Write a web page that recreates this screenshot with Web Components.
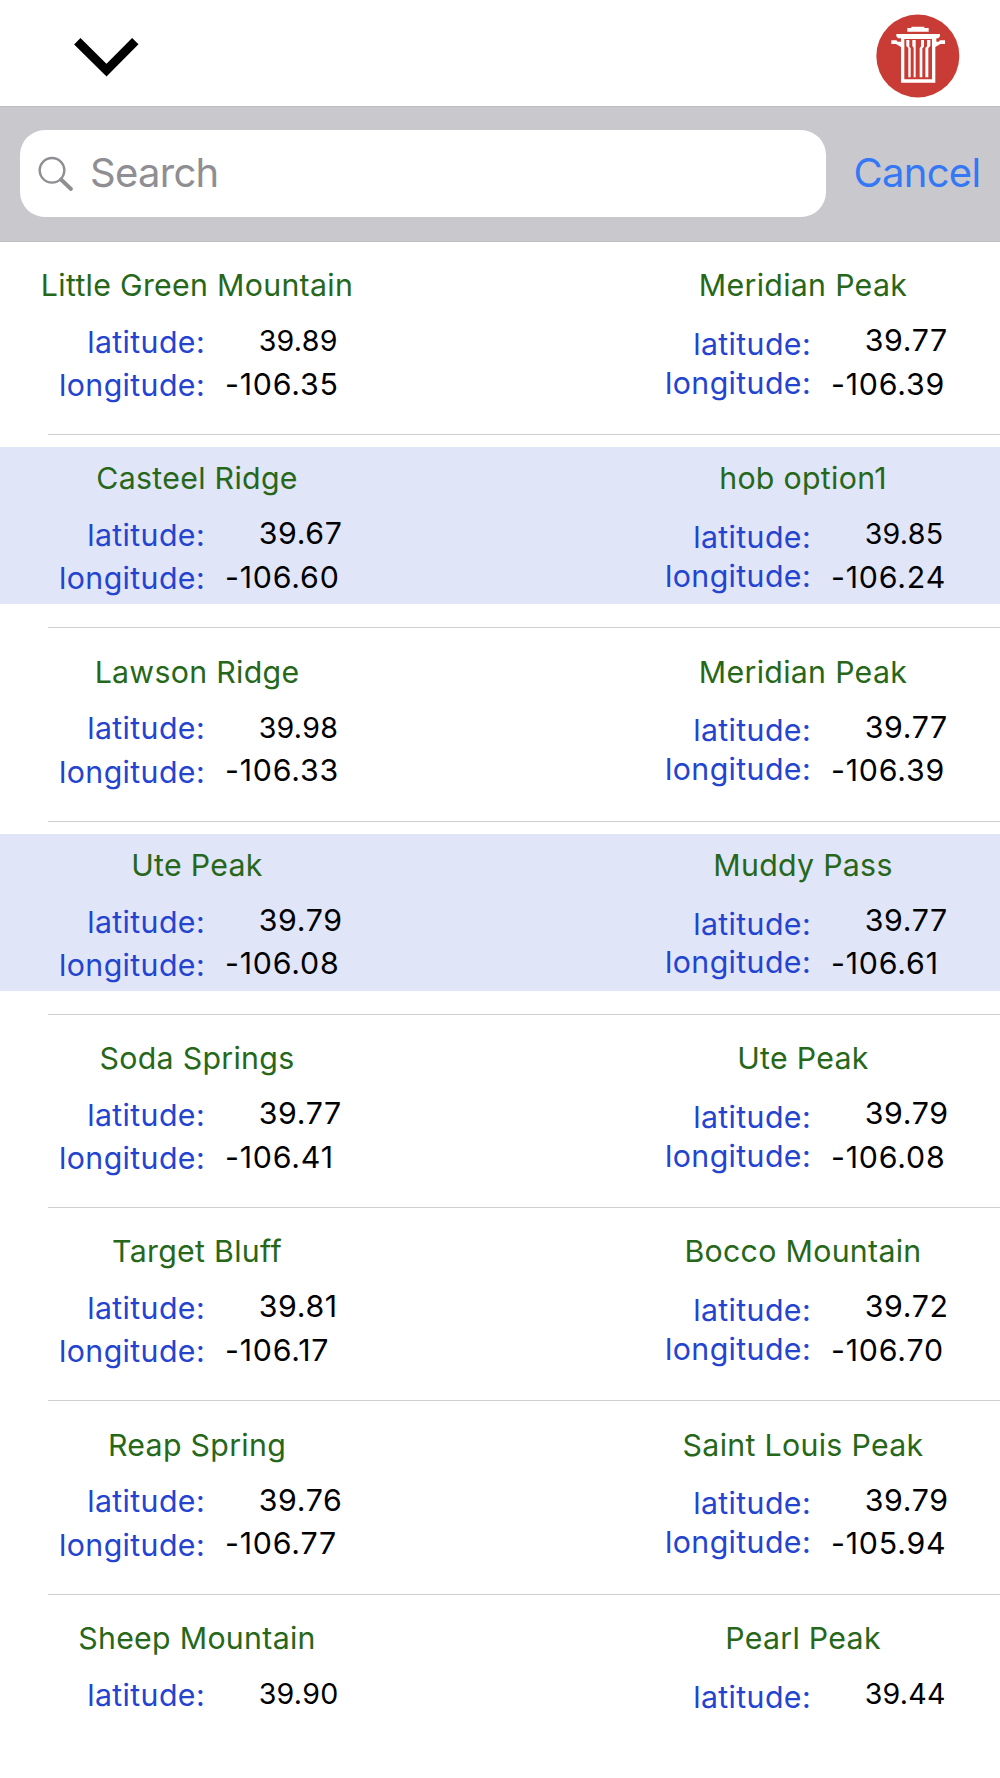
<!DOCTYPE html>
<html lang="en">
<head>
<meta charset="utf-8">
<title>Locations</title>
<style>
    body {
        margin: 0;
        height: 1778px;
        overflow: hidden;
        background: #fff;
        font-family: Inter, "Liberation Sans", sans-serif;
    }
</style>
</head>
<body>
<place-screen></place-screen>

<script>
// Build a shadow root from a markup string
function render(host, html) {
    const template = document.createElement('template');
    template.innerHTML = html;
    host.attachShadow({mode: 'open'}).appendChild(template.content.cloneNode(true));
}

// Top bar: collapse chevron on the left, trash button on the right
class NavBar extends HTMLElement {
    constructor() {
        super();
        render(this, `
            <style>
                :host {
                    display: flex;
                    flex: none;
                    justify-content: space-between;
                    align-items: center;
                    box-sizing: border-box;
                    height: 106px;
                    padding: 6px 40px 0 74px;
                }
                svg { display: block; }
                .chevron { margin-top: 2px; }
            </style>
            <svg class="chevron" width="65" height="39" viewBox="0 0 65 39">
                <path d="M3.3 3.2 32.5 32.2 61.3 3.2" fill="none" stroke="#000" stroke-width="9"/>
            </svg>
            <svg width="84" height="84" viewBox="47 42 252 252">
                <circle cx="172.5" cy="168" r="124.5" fill="#c83c35"/>
                <g fill="#fff">
                    <path d="M141 84h12v-4h39v4h13v11h-64z"/>
                    <path d="M108 102h131v7l-5 6h-6v10l7 0 4-4h15v11h-14l-15 9v107H122V141l-15-9H93v-11h15l4 4h10v-10h-9l-5-6z"/>
                </g>
                <path d="M132 117h83v121h-83z" fill="#c83c35"/>
                <path d="M138 120h9v20l4 5v87h-7v-88l-6-6zM156 120h10v112h-6v-88l-4-6zM182 120h9v20l-5 5v87h-8v-88l4-5zM200 120h10v18l-6 6v88h-9v-88l5-5z" fill="#fff"/>
            </svg>
        `);
    }
}

class SearchBar extends HTMLElement {
    constructor() {
        super();
        render(this, `
            <style>
                :host {
                    display: flex;
                    flex: none;
                    align-items: center;
                    box-sizing: border-box;
                    height: 136px;
                    padding: 0 0 1px 19.5px;
                    background: #c9c8cd;
                    border-top: 1px solid #bebec1;
                    border-bottom: 1px solid #bebec1;
                    font-size: 40px;
                    line-height: 50px;
                    letter-spacing: -0.7px;
                }
                .field {
                    display: flex;
                    flex: none;
                    align-items: center;
                    box-sizing: border-box;
                    width: 806.5px;
                    height: 87px;
                    padding-left: 18px;
                    border-radius: 25px;
                    background: #fff;
                    color: #8e8e93;
                }
                .field span { margin: -1px 0 0 16.5px; }
                .cancel { margin: -1px 0 0 27.5px; color: #3478f6; white-space: nowrap; }
            </style>
            <div class="field">
                <svg width="36" height="36" viewBox="0 0 36 36" fill="none" stroke="#8e8e93">
                    <circle cx="14" cy="14.3" r="12.3" stroke-width="2.4"/>
                    <path d="M23 23.5 33 33" stroke-width="3.8" stroke-linecap="round"/>
                </svg>
                <span><slot></slot></span>
            </div>
            <div class="cancel"><slot name="cancel"></slot></div>
        `);
    }
}

// One place: name on top, then a label column and a value column
class PlaceCell extends HTMLElement {
    constructor() {
        super();
        const lonLabel = this.hasAttribute('partial') ? '' : '<div>longitude:</div>';
        render(this, `
            <style>
                :host {
                    display: block;
                    width: 394px;
                    font-size: 30.3px;
                    letter-spacing: 0.3px;
                    white-space: nowrap;
                    --label-top: 14.8px;
                    --label-line: 43.3px;
                }
                :host([side="right"]) {
                    --label-top: 18.8px;
                    --label-line: 38.7px;
                }
                .name {
                    line-height: 41px;
                    text-align: center;
                    color: #26671a;
                }
                .coords { display: flex; }
                .labels {
                    width: 205px;
                    padding-top: var(--label-top);
                    line-height: var(--label-line);
                    letter-spacing: 0.38px;
                    text-align: right;
                    color: #2444cf;
                }
                .values {
                    padding: 13px 0 0 20px;
                    line-height: 43.6px;
                    letter-spacing: 0.8px;
                    color: #000;
                }
                .lat { height: 43.6px; padding-left: 33.7px; letter-spacing: 0.65px; }
                :host([small]) .lat { font-size: 28.6px; letter-spacing: 0.25px; }
            </style>
            <div class="name"><slot name="name"></slot></div>
            <div class="coords">
                <div class="labels">
                    <div>latitude:</div>
                    ${lonLabel}
                </div>
                <div class="values">
                    <div class="lat"><slot name="lat"></slot></div>
                    <div><slot name="lon"></slot></div>
                </div>
            </div>
        `);
    }
}

// Table row; "shaded" rows get a tinted band behind both cells
class PlaceRow extends HTMLElement {
    constructor() {
        super();
        render(this, `
            <style>
                :host {
                    display: block;
                    box-sizing: border-box;
                    height: 193.25px;
                    padding-top: 12px;
                }
                .band {
                    display: flex;
                    justify-content: space-between;
                    box-sizing: border-box;
                    height: 157px;
                    padding-top: 11px;
                }
                :host([shaded]) .band { background: #e0e5f8; }
                .line {
                    height: 1px;
                    margin: 23px 0 0 48px;
                    background: #cfcfd1;
                }
                :host(:last-of-type) .line { display: none; }
            </style>
            <div class="band"><slot></slot></div>
            <div class="line"></div>
        `);
    }
}

// [name, latitude, longitude, small latitude figures]
const PLACES = [
    [['Little Green Mountain', '39.89', '-106.35', true], ['Meridian Peak', '39.77', '-106.39']],
    [['Casteel Ridge', '39.67', '-106.60'], ['hob option1', '39.85', '-106.24', true]],
    [['Lawson Ridge', '39.98', '-106.33', true], ['Meridian Peak', '39.77', '-106.39']],
    [['Ute Peak', '39.79', '-106.08'], ['Muddy Pass', '39.77', '-106.61']],
    [['Soda Springs', '39.77', '-106.41'], ['Ute Peak', '39.79', '-106.08']],
    [['Target Bluff', '39.81', '-106.17'], ['Bocco Mountain', '39.72', '-106.70']],
    [['Reap Spring', '39.76', '-106.77'], ['Saint Louis Peak', '39.79', '-105.94']],
    [['Sheep Mountain', '39.90', '', true], ['Pearl Peak', '39.44', '', true]]
];

class PlaceScreen extends HTMLElement {
    constructor() {
        super();
        const cell = ([name, lat, lon, small], i) => `
            <place-cell ${i ? 'side="right"' : ''} ${small ? 'small' : ''} ${lon ? '' : 'partial'}>
                <span slot="name">${name}</span>
                <span slot="lat">${lat}</span>
                ${lon ? `<span slot="lon">${lon}</span>` : ''}
            </place-cell>`;
        const rows = PLACES.map((pair, i) => `
            <place-row ${i === 1 || i === 3 ? 'shaded' : ''}>${pair.map(cell).join('')}</place-row>`);

        render(this, `
            <style>
                :host { display: flex; flex-direction: column; height: 1778px; overflow: hidden; }
            </style>
            <nav-bar></nav-bar>
            <search-bar>Search<span slot="cancel">Cancel</span></search-bar>
            <div class="rows">${rows.join('')}</div>
        `);
    }
}

customElements.define('nav-bar', NavBar);
customElements.define('search-bar', SearchBar);
customElements.define('place-cell', PlaceCell);
customElements.define('place-row', PlaceRow);
customElements.define('place-screen', PlaceScreen);
</script>
</body>
</html>
